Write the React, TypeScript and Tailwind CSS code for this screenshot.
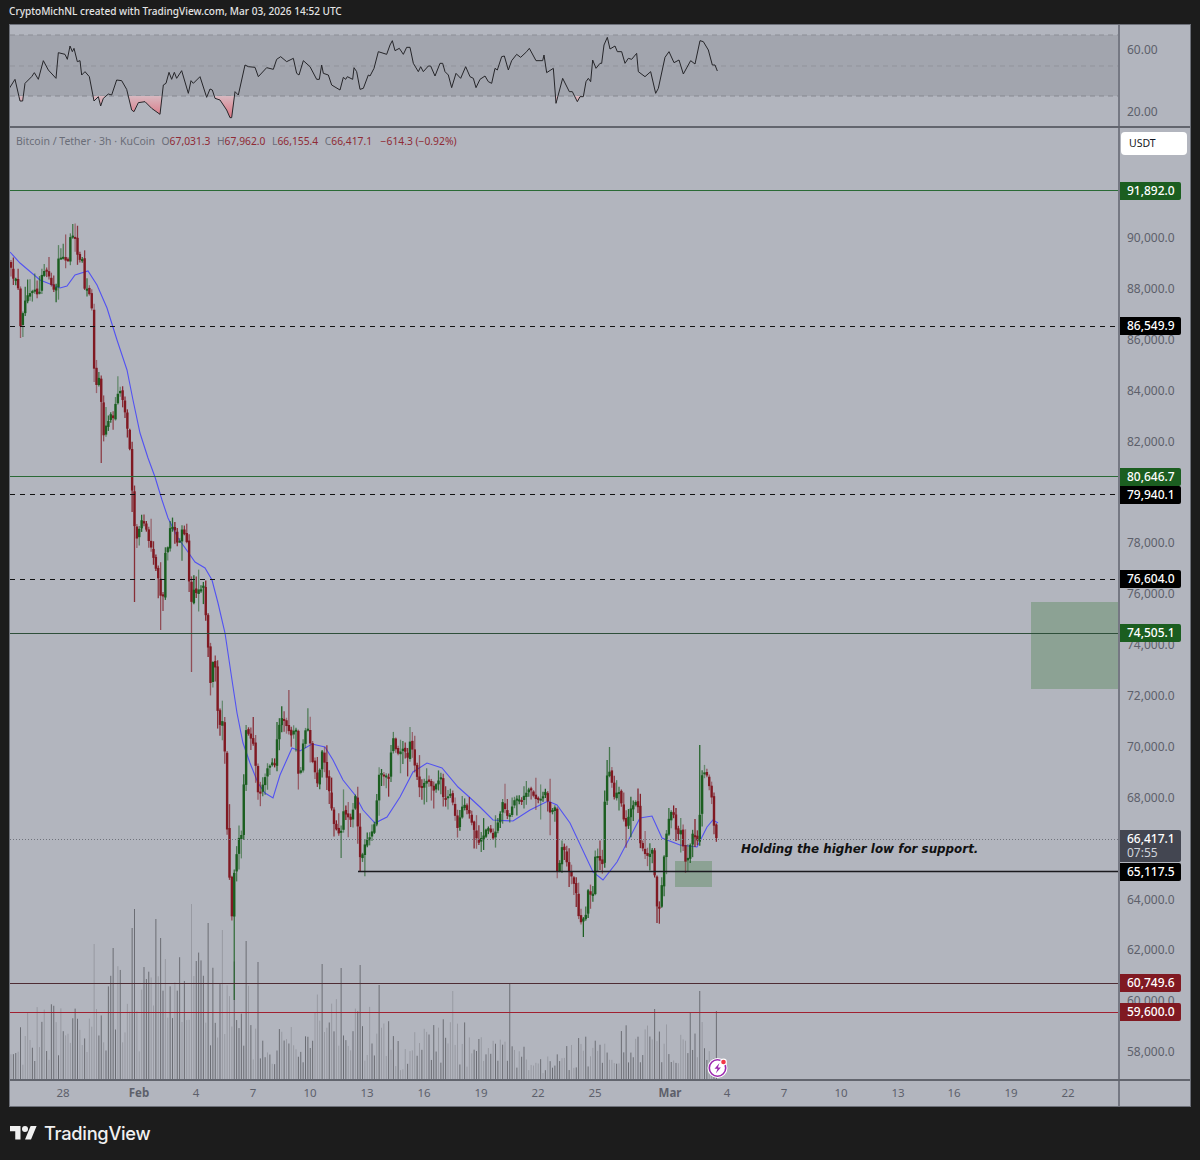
import React from "react";

const priceY = (p: number) => 238.7 + (90000 - p) * 0.025437;
const lineY = (p: number) => Math.floor(priceY(p) + 0.3) + 0.5;

// page coordinates read off the chart: x, y pairs
const closePts = [
  10,265, 12,280, 15,278, 18,290, 20,325, 25,300, 30,292, 35,288, 38,297, 42,272, 45,268, 50,282, 55,295, 58,258, 63,257, 68,262,
  70,236, 75,238, 78,262, 82,258, 83,290, 88,287, 92,315, 94,380, 96,385, 99,377, 103,435, 107,422, 110,415, 113,420, 116,395,
  120,390, 125,415, 130,455, 133,522, 137,540, 140,520, 145,525, 148,540, 153,557, 158,580, 162,607, 165,550, 168,548, 170,523,
  175,533, 178,547, 182,527, 187,543, 188,563, 190,623, 192,583, 195,595, 200,588, 203,587, 207,637, 210,682, 211,658, 215,667,
  218,728, 222,722, 225,763, 227,843, 228,860, 232,927, 233,877, 238,840, 242,833, 243,793, 245,728, 253,743, 258,797, 263,783,
  267,767, 272,763, 275,767, 277,730, 282,717, 287,727, 292,737, 295,722, 298,775, 302,767, 303,730, 308,730, 312,760, 317,785,
  322,750, 327,780, 333,823, 340,835, 343,810, 350,820, 355,797, 360,863, 365,843, 372,832, 375,820, 378,773, 388,778, 392,735,
  397,755, 403,747, 407,760, 410,737, 415,770, 420,790, 427,778, 433,790, 440,775, 443,800, 450,793, 457,827, 463,803, 470,817,
  477,843, 483,837, 487,827, 493,838, 498,820, 502,803, 508,820, 513,800, 522,800, 528,788, 537,800, 545,793, 550,813, 555,808,
  557,880, 562,843, 568,870, 575,887, 579,923, 585,917, 587,890, 592,900, 595,853, 602,863, 605,780, 610,768, 613,800, 618,788,
  625,828, 630,810, 637,798, 640,845, 647,857, 652,850, 657,913, 660,903, 663,863, 667,825, 672,808, 677,837, 680,828, 686,867,
  690,843, 693,832, 697,842, 699,818, 702,768, 707,778, 712,800, 713,823, 718,838,
];

const maPts = [
  10,252, 20,263, 40,280, 60,288, 67,286, 75,275, 88,271, 97,285, 107,308, 117,340, 127,370, 133,400, 140,433, 148,458, 155,477,
  162,500, 168,518, 178,538, 188,552, 195,562, 205,568, 212,580, 218,603, 225,633, 232,680, 237,713, 243,743, 250,763, 258,783,
  265,793, 273,798, 280,775, 292,748, 300,751, 312,744, 325,747, 333,760, 343,780, 355,795, 363,810, 375,823, 387,817, 400,797,
  413,772, 427,763, 442,768, 458,787, 467,795, 480,807, 493,820, 513,821, 530,810, 548,801, 557,805, 570,823, 593,872, 603,880,
  617,862, 640,818, 652,816, 662,838, 680,845, 697,847, 707,827, 713,820, 718,823,
];

// rsi line, two stretches read separately (x/3 + offset, 20 + y/3)
const rsiA = [
  28,205, 45,178, 60,243, 68,243, 75,190, 95,170, 103,158, 115,178, 130,122, 145,150, 168,175, 175,98, 195,103, 202,118, 210,78,
  217,95, 222,85, 232,125, 240,122, 245,165, 255,155, 268,170, 282,243, 295,230, 302,258, 310,235, 325,222, 335,225, 350,180,
  365,182, 380,208, 395,270, 402,275, 415,248, 435,245, 455,265, 480,283, 490,195, 498,190, 507,157, 515,178, 523,157, 530,175,
  545,152, 565,220, 573,182, 580,190, 600,170, 620,232, 630,207, 637,210, 645,235, 660,240, 680,270, 690,293, 695,293, 705,215,
  715,225, 735,135, 745,140, 765,142, 775,170, 800,143, 820,148, 830,118, 842,110, 860,125, 880,115, 890,160, 897,165, 910,122,
  930,140, 950,178, 958,178, 965,135, 970,160, 985,165, 995,195, 1020,210, 1030,172, 1037,178, 1042,170, 1058,178, 1062,143,
  1070,155, 1080,208, 1090,205, 1105,165,
];
const rsiB = [
  0,168, 12,145, 25,95, 50,103, 60,75, 67,62, 75,92, 88,85, 100,103, 110,82, 120,82, 130,130, 145,155, 152,140, 160,155, 175,138,
  182,138, 195,168, 210,130, 218,130, 225,155, 235,165, 245,203, 258,160, 272,175, 287,140, 300,170, 310,175, 318,203, 330,178,
  345,168, 355,185, 365,190, 375,145, 382,150, 395,110, 403,108, 415,150, 425,122, 440,103, 452,112, 470,95, 478,85, 498,122,
  518,122, 522,105, 530,158, 550,145, 558,250, 578,175, 598,215, 607,215, 622,245, 630,230, 640,230, 648,185, 655,175, 662,185,
  668,120, 678,145, 690,130, 695,130, 702,75, 712,52, 720,87, 735,78, 742,95, 755,95, 765,130, 775,115, 785,118, 800,100, 805,155,
  825,170, 842,155, 857,220, 865,205, 885,112, 897,95, 912,128, 927,120, 940,162, 962,122, 975,132, 990,62, 1000,65, 1015,90,
  1027,135, 1035,135, 1042,153,
];

// long wicks: x, high y, low y
const wickFix = [
  [72,224,0], [20,0,338], [23,0,337], [101,0,463], [134,0,602], [161,0,630], [192,0,672], [234,0,1000], [288,690,0], [410,727,0],
  [340,0,858], [360,0,872], [583,0,937], [610,747,0], [656,0,923], [700,745,0], [718,798,845], [686,0,873],
];

// upper edge of the volume bars, as height over the time axis
const volEdge = [
  10,50, 30,70, 60,85, 90,75, 113,110, 135,125, 155,120, 190,140, 220,130, 235,125, 260,65, 280,50, 320,95, 340,85, 360,70, 378,75,
  400,40, 420,50, 450,70, 480,45, 510,55, 530,22, 555,25, 580,45, 600,45, 620,55, 660,55, 700,60, 718,45,
];
const volFix = [
  [93,135], [134,170], [155,160], [113,131], [132,151], [160,141], [191,175], [207,156], [223,149], [246,138], [257,117], [321,115],
  [340,111], [359,114], [378,94], [453,88], [510,95], [655,70], [689,67], [700,88], [717,68],
];

const at = (pts: number[], x: number) => {
  for (let i = 0; i < pts.length - 2; i += 2) {
    if (x <= pts[i + 2]) {
      const t = (x - pts[i]) / (pts[i + 2] - pts[i] || 1);
      return pts[i + 1] + (pts[i + 3] - pts[i + 1]) * t;
    }
  }
  return pts[pts.length - 1];
};

const poly = (pts: number[]) => {
  const out: string[] = [];
  for (let i = 0; i < pts.length; i += 2) out.push(`${pts[i]},${pts[i + 1]}`);
  return out.join(" ");
};

function rng(seed: number) {
  let s = seed;
  return () => {
    s = (s * 1664525 + 1013904223) % 4294967296;
    return s / 4294967296;
  };
}

const rand = rng(20260303);
const bars = Array.from({ length: 298 }, (_, i) => {
  const x = 10.5 + i * 2.375;
  const close = i === 297 ? 838 : at(closePts, x) + (rand() - 0.5) * 3;
  const open = i === 0 ? 262 : at(closePts, x - 2.375);
  let hi = Math.min(open, close) - 1 - rand() * rand() * 24;
  let lo = Math.max(open, close) + 1 + rand() * rand() * 24;
  for (const [wx, wh, wl] of wickFix) {
    if (Math.abs(wx - x) <= 1.2) {
      if (wh) hi = wh;
      if (wl) lo = wl;
    }
  }
  let vol = at(volEdge, x) * (0.22 + rand() * 0.78);
  for (const [vx, vh] of volFix) {
    if (Math.abs(vx - x) <= 1.2) vol = vh;
  }
  return { x, open, close, hi, lo, vol, wickOp: 0.45 + rand() * 0.55, dark: rand() > 0.5 };
});

const rsiPts = [
  ...rsiA.flatMap((v, i) => (i % 2 === 0 ? [v / 3] : [20 + v / 3])),
  ...rsiB.flatMap((v, i) => (i % 2 === 0 ? [370 + v / 3] : [20 + v / 3])),
];

const dayTicks = [
  { x: 63, t: "28" }, { x: 139, t: "Feb", b: true }, { x: 196, t: "4" }, { x: 253, t: "7" }, { x: 310, t: "10" }, { x: 367, t: "13" },
  { x: 424, t: "16" }, { x: 481, t: "19" }, { x: 538, t: "22" }, { x: 595, t: "25" }, { x: 670, t: "Mar", b: true }, { x: 727, t: "4" },
  { x: 784, t: "7" }, { x: 841, t: "10" }, { x: 898, t: "13" }, { x: 954, t: "16" }, { x: 1011, t: "19" }, { x: 1068, t: "22" },
];

const scalePrices = [90000, 88000, 86000, 84000, 82000, 78000, 76000, 74000, 72000, 70000, 68000, 64000, 62000, 60000, 58000];

const tags = [
  { p: 91892, t: "91,892.0", c: "bg-[#1b5e20]" },
  { p: 86549.9, t: "86,549.9", c: "bg-black" },
  { p: 80646.7, t: "80,646.7", c: "bg-[#1b5e20]" },
  { p: 79940.1, t: "79,940.1", c: "bg-black" },
  { p: 76604, t: "76,604.0", c: "bg-black" },
  { p: 74505.1, t: "74,505.1", c: "bg-[#1b5e20]" },
  { p: 65117.5, t: "65,117.5", c: "bg-black" },
  { p: 60749.6, t: "60,749.6", c: "bg-[#801922]" },
  { p: 59600, t: "59,600.0", c: "bg-[#801922]" },
];

function RsiPane() {
  return (
    <svg viewBox="10 25 1108 102" className="block h-[102px] w-[1108px]">
      <defs>
        <clipPath id="below">
          <rect x="10" y="96" width="1108" height="31" />
        </clipPath>
        <linearGradient id="pink" gradientUnits="userSpaceOnUse" x1="0" y1="96" x2="0" y2="118">
          <stop offset="0" stopColor="#d8b8c0" />
          <stop offset="1" stopColor="#dc7482" />
        </linearGradient>
      </defs>
      <rect x="10" y="35" width="1108" height="61" fill="#a2a5ae" />
      <line x1="10" x2="1118" y1="35" y2="35" stroke="#8b8d95" strokeDasharray="5 4" />
      <line x1="10" x2="1118" y1="66" y2="66" stroke="#91939b" strokeDasharray="5 4" />
      <line x1="10" x2="1118" y1="96" y2="96" stroke="#85878f" strokeDasharray="5 4" />
      <polygon points={`${poly(rsiPts)} 717,96 9,96`} fill="url(#pink)" clipPath="url(#below)" />
      <polyline points={poly(rsiPts)} fill="none" stroke="#26262a" strokeWidth="1" strokeLinejoin="round" />
    </svg>
  );
}

function MainPane() {
  return (
    <svg viewBox="10 128 1108 951" className="block h-[951px] w-[1108px]">
      {bars.map((b, i) => (
        <rect
          key={i}
          x={b.x}
          y={1079 - b.vol}
          width="1"
          height={b.vol}
          fill={b.dark ? "#6b6d74" : "#989aa2"}
        />
      ))}
      <rect x="1031" y="602" width="88" height="87" fill="#8ca294" />
      <rect x="675" y="861" width="37" height="26" fill="#8ca294" />
      <polyline points={poly(maPts)} fill="none" stroke="#5252f2" strokeWidth="1.1" />
      {bars.map((b, i) => {
        const up = b.close < b.open;
        const col = up ? "#1b5e20" : "#801922";
        const top = Math.min(b.open, b.close);
        return (
          <g key={i}>
            <line x1={b.x + 0.5} x2={b.x + 0.5} y1={b.hi} y2={b.lo} stroke={col} strokeWidth="1.3" strokeOpacity={b.wickOp} />
            <rect x={b.x - 0.7} y={top} width="2.4" height={Math.max(2, Math.abs(b.open - b.close))} fill={col} />
          </g>
        );
      })}
      <line x1="10" x2="1118" y1={lineY(91892)} y2={lineY(91892)} stroke="#2a6a36" />
      <line x1="10" x2="1118" y1={lineY(86549.9)} y2={lineY(86549.9)} stroke="#111" strokeDasharray="5 5" />
      <line x1="10" x2="1118" y1={lineY(80646.7)} y2={lineY(80646.7)} stroke="#2a6a36" />
      <line x1="10" x2="1118" y1={lineY(79940.1)} y2={lineY(79940.1)} stroke="#111" strokeDasharray="5 5" />
      <line x1="10" x2="1118" y1={lineY(76604)} y2={lineY(76604)} stroke="#111" strokeDasharray="5 5" />
      <line x1="10" x2="1118" y1={lineY(74505.1)} y2={lineY(74505.1)} stroke="#2e4f3a" />
      <line x1="10" x2="1118" y1="839.5" y2="839.5" stroke="#70737c" strokeDasharray="1 2" />
      <line x1="358" x2="1118" y1={lineY(65117.5)} y2={lineY(65117.5)} stroke="#1a1a1e" strokeWidth="1.4" />
      <line x1="10" x2="1118" y1={lineY(60749.6)} y2={lineY(60749.6)} stroke="#4e2c34" />
      <line x1="10" x2="1118" y1={lineY(59600)} y2={lineY(59600)} stroke="#a02030" />
    </svg>
  );
}

function BoltBadge() {
  return (
    <div className="absolute left-[697px] top-[929px]">
      <svg viewBox="0 0 22 22" className="block h-[22px] w-[22px]">
        <circle cx="10.5" cy="11" r="10" fill="#fff" />
        <circle cx="10.5" cy="11" r="8.2" fill="#fff" stroke="#9c27b0" strokeWidth="1.6" />
        <path d="M12.5 6 7.5 11.8h3l-1.6 4.4 5-5.8h-3z" fill="#9c27b0" />
        <circle cx="16.5" cy="5" r="3.4" fill="#fff" />
        <circle cx="16.5" cy="5" r="2.3" fill="#f23645" />
      </svg>
    </div>
  );
}

export default function App() {
  return (
    <div className="flex h-[1160px] w-[1200px] flex-col bg-[#1c1c1c] font-['Noto_Sans',sans-serif]">
      <div className="flex h-6 items-center pl-[9px] text-[10.05px] font-medium text-[#e4e4e4]">
        CryptoMichNL created with TradingView.com, Mar 03, 2026 14:52 UTC
      </div>

      <div className="ml-[9px] flex w-[1182px] flex-col border border-[#6d7079] bg-[#b2b5be]">
        <div className="flex h-[103px] border-b-2 border-[#62656e]">
          <RsiPane />
          <div className="relative w-[72px] border-l-2 border-[#757883] text-[12px] text-[#5d606b]">
            <span className="absolute left-[7px] top-[16px]">60.00</span>
            <span className="absolute left-[7px] top-[78px]">20.00</span>
          </div>
        </div>

        <div className="flex h-[951px]">
          <div className="relative h-[951px] w-[1108px]">
            <MainPane />
            <div className="absolute left-[6px] top-[6px] flex gap-[6.5px] text-[10.3px] text-[#6a6d78]">
              <span className="text-[10.5px]">Bitcoin / Tether · 3h · KuCoin</span>
              <span>
                O<span className="text-[#8f2a35]">67,031.3</span>
              </span>
              <span>
                H<span className="text-[#8f2a35]">67,962.0</span>
              </span>
              <span>
                L<span className="text-[#8f2a35]">66,155.4</span>
              </span>
              <span>
                C<span className="text-[#8f2a35]">66,417.1</span>
              </span>
              <span className="ml-[2px] text-[#8f2a35]">−614.3 (−0.92%)</span>
            </div>
            <div className="absolute left-[731px] top-[713px] font-['DejaVu_Sans',sans-serif] text-[11.9px] font-bold italic text-[#111]">
              Holding the higher low for support.
            </div>
            <BoltBadge />
          </div>

          <div className="relative w-[72px] border-l-2 border-[#757883] text-[12px] text-[#5d606b]">
            <div className="absolute left-[1px] top-[4px] flex h-[23px] w-[66px] items-center rounded-[4px] bg-white pl-[8px] pt-px text-[10.5px] text-[#131722]">
              USDT
            </div>
            {scalePrices.map((p) => (
              <span key={p} className="absolute left-[7px]" style={{ top: priceY(p) - 128 - 9.5 }}>
                {p.toLocaleString("en-US")}.0
              </span>
            ))}
            {tags.map((tag) => (
              <div
                key={tag.t}
                className={`absolute left-0 flex h-[18px] w-[61px] items-center rounded-r-[2px] pl-[7px] font-medium text-white ${tag.c}`}
                style={{ top: priceY(tag.p) - 128 - 9 }}
              >
                {tag.t}
              </div>
            ))}
            <div className="absolute left-0 top-[702px] flex h-[32px] w-[61px] flex-col justify-center rounded-r-[2px] bg-[#434651] pl-[7px] leading-[14px] text-white">
              <span className="font-medium">66,417.1</span>
              <span className="text-[#d1d4dc]">07:55</span>
            </div>
          </div>
        </div>

        <div className="flex h-[27px] border-t-2 border-[#62656e]">
          <div className="relative w-[1108px] text-[11.5px] text-[#5d606b]">
            {dayTicks.map((d) => (
              <span
                key={d.x}
                className={d.b ? "absolute top-[3px] -translate-x-1/2 font-bold" : "absolute top-[3px] -translate-x-1/2"}
                style={{ left: d.x - 10 }}
              >
                {d.t}
              </span>
            ))}
          </div>
          <div className="w-[72px] border-l-2 border-[#757883]" />
        </div>
      </div>

      <div className="flex flex-1 items-center gap-[7px] pl-[10px]">
        <svg viewBox="0 0 36 28" className="h-[21px] w-[27px] fill-[#f0f0f0]">
          <path d="M14 22H7V11H0V4h14v18zM28 22h-8l7.5-18h8L28 22z" />
          <circle cx="20" cy="8" r="4" />
        </svg>
        <span className="font-['Inter',sans-serif] text-[18.3px] font-medium tracking-[-0.3px] text-[#f0f0f0]">TradingView</span>
      </div>
    </div>
  );
}
